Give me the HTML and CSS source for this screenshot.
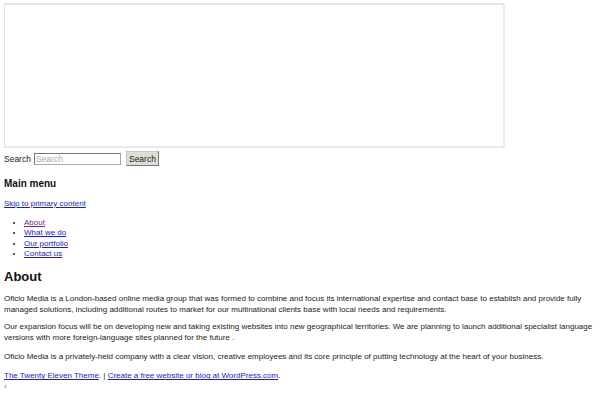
FILE: index.html
```html
<!DOCTYPE html>
<html>
<head>
<meta charset="utf-8">
<link rel="stylesheet" href="styles.css">
</head>
<body>
<div class="frame"></div>
<form class="search">
  <label class="search-label">Search</label>
  <input class="search-input" type="text" placeholder="Search">
  <button class="search-btn" type="button">Search</button>
</form>
<h3 class="menu-title">Main menu</h3>
<p class="skip"><a href="#">Skip to primary content</a></p>
<ul class="menu">
  <li><a href="#" class="visited">About</a></li>
  <li><a href="#">What we do</a></li>
  <li><a href="#">Our portfolio</a></li>
  <li><a href="#">Contact us</a></li>
</ul>
<h2 class="page-title">About</h2>
<p class="para para-first">Oficio Media is a London-based online media group that was formed to combine and focus its international expertise and contact base to establish and provide fully managed solutions, including additional routes to market for our multinational clients base with local needs and requirements.</p>
<p class="para">Our expansion focus will be on developing new and taking existing websites into new geographical territories. We are planning to launch additional specialist language versions with more foreign-language sites planned for the future .</p>
<p class="para para-last">Oficio Media is a privately-held company with a clear vision, creative employees and its core principle of putting technology at the heart of your business.</p>
<p class="footer"><a href="#">The Twenty Eleven Theme</a>. | <a href="#">Create a free website or blog at WordPress.com</a>.</p>
<p class="tiny">¤</p>
</body>
</html>
```
FILE: styles.css
```css
html, body {
  background: #fff;
}
body {
  margin: 3px 4px;
  font-family: "Liberation Sans", Arial, sans-serif;
  font-size: 8px;
  color: #222;
}
a {
  color: #1a1ad8;
}
a.visited {
  color: #6b2a8c;
}
.frame {
  width: 498px;
  height: 141px;
  border: 2px solid #e4e4e4;
  border-right-color: #ececec;
  border-bottom-color: #e8e8e8;
  margin-left: -1px;
}
.search {
  display: flex;
  align-items: center;
  margin-top: 3px;
  height: 15px;
}
.search-label {
  font-size: 8.5px;
  color: #222;
}
.search-input {
  margin: 0 0 0 3px;
  width: 87px;
  height: 12px;
  box-sizing: border-box;
  padding: 0 1px;
  font-family: "Liberation Sans", Arial, sans-serif;
  font-size: 8.5px;
  border: 1px solid #aaa;
  border-top-color: #777;
  border-left-color: #777;
  color: #222;
}
.search-input::placeholder {
  color: #aaa;
}
.search-btn {
  margin-left: 5px;
  width: 33px;
  height: 15px;
  box-sizing: border-box;
  padding: 0;
  font-family: "Liberation Sans", Arial, sans-serif;
  font-size: 8.5px;
  color: #222;
  background: #e0ddd6;
  border: 1px solid #c8c5be;
  border-right-color: #777;
  border-bottom-color: #777;
}
.menu-title {
  font-size: 10px;
  font-weight: bold;
  margin: 12px 0 0;
  line-height: 12px;
  color: #111;
}
.skip {
  margin: 9px 0 0;
  line-height: 10px;
}
.menu {
  margin: 9px 0 0;
  padding-left: 20px;
  line-height: 10.3px;
}
.page-title {
  font-size: 13px;
  font-weight: bold;
  color: #111;
  margin: 10px 0 0;
  line-height: 16px;
}
.para {
  margin: 6px 0 0;
  line-height: 11px;
}
.para-first {
  margin-top: 8px;
}
.para-last {
  margin-top: 8px;
}
.footer {
  margin: 8px 0 0;
  line-height: 11px;
}
.tiny {
  margin: 1px 0 0;
  font-size: 5px;
  line-height: 8px;
  color: #888;
}
```
